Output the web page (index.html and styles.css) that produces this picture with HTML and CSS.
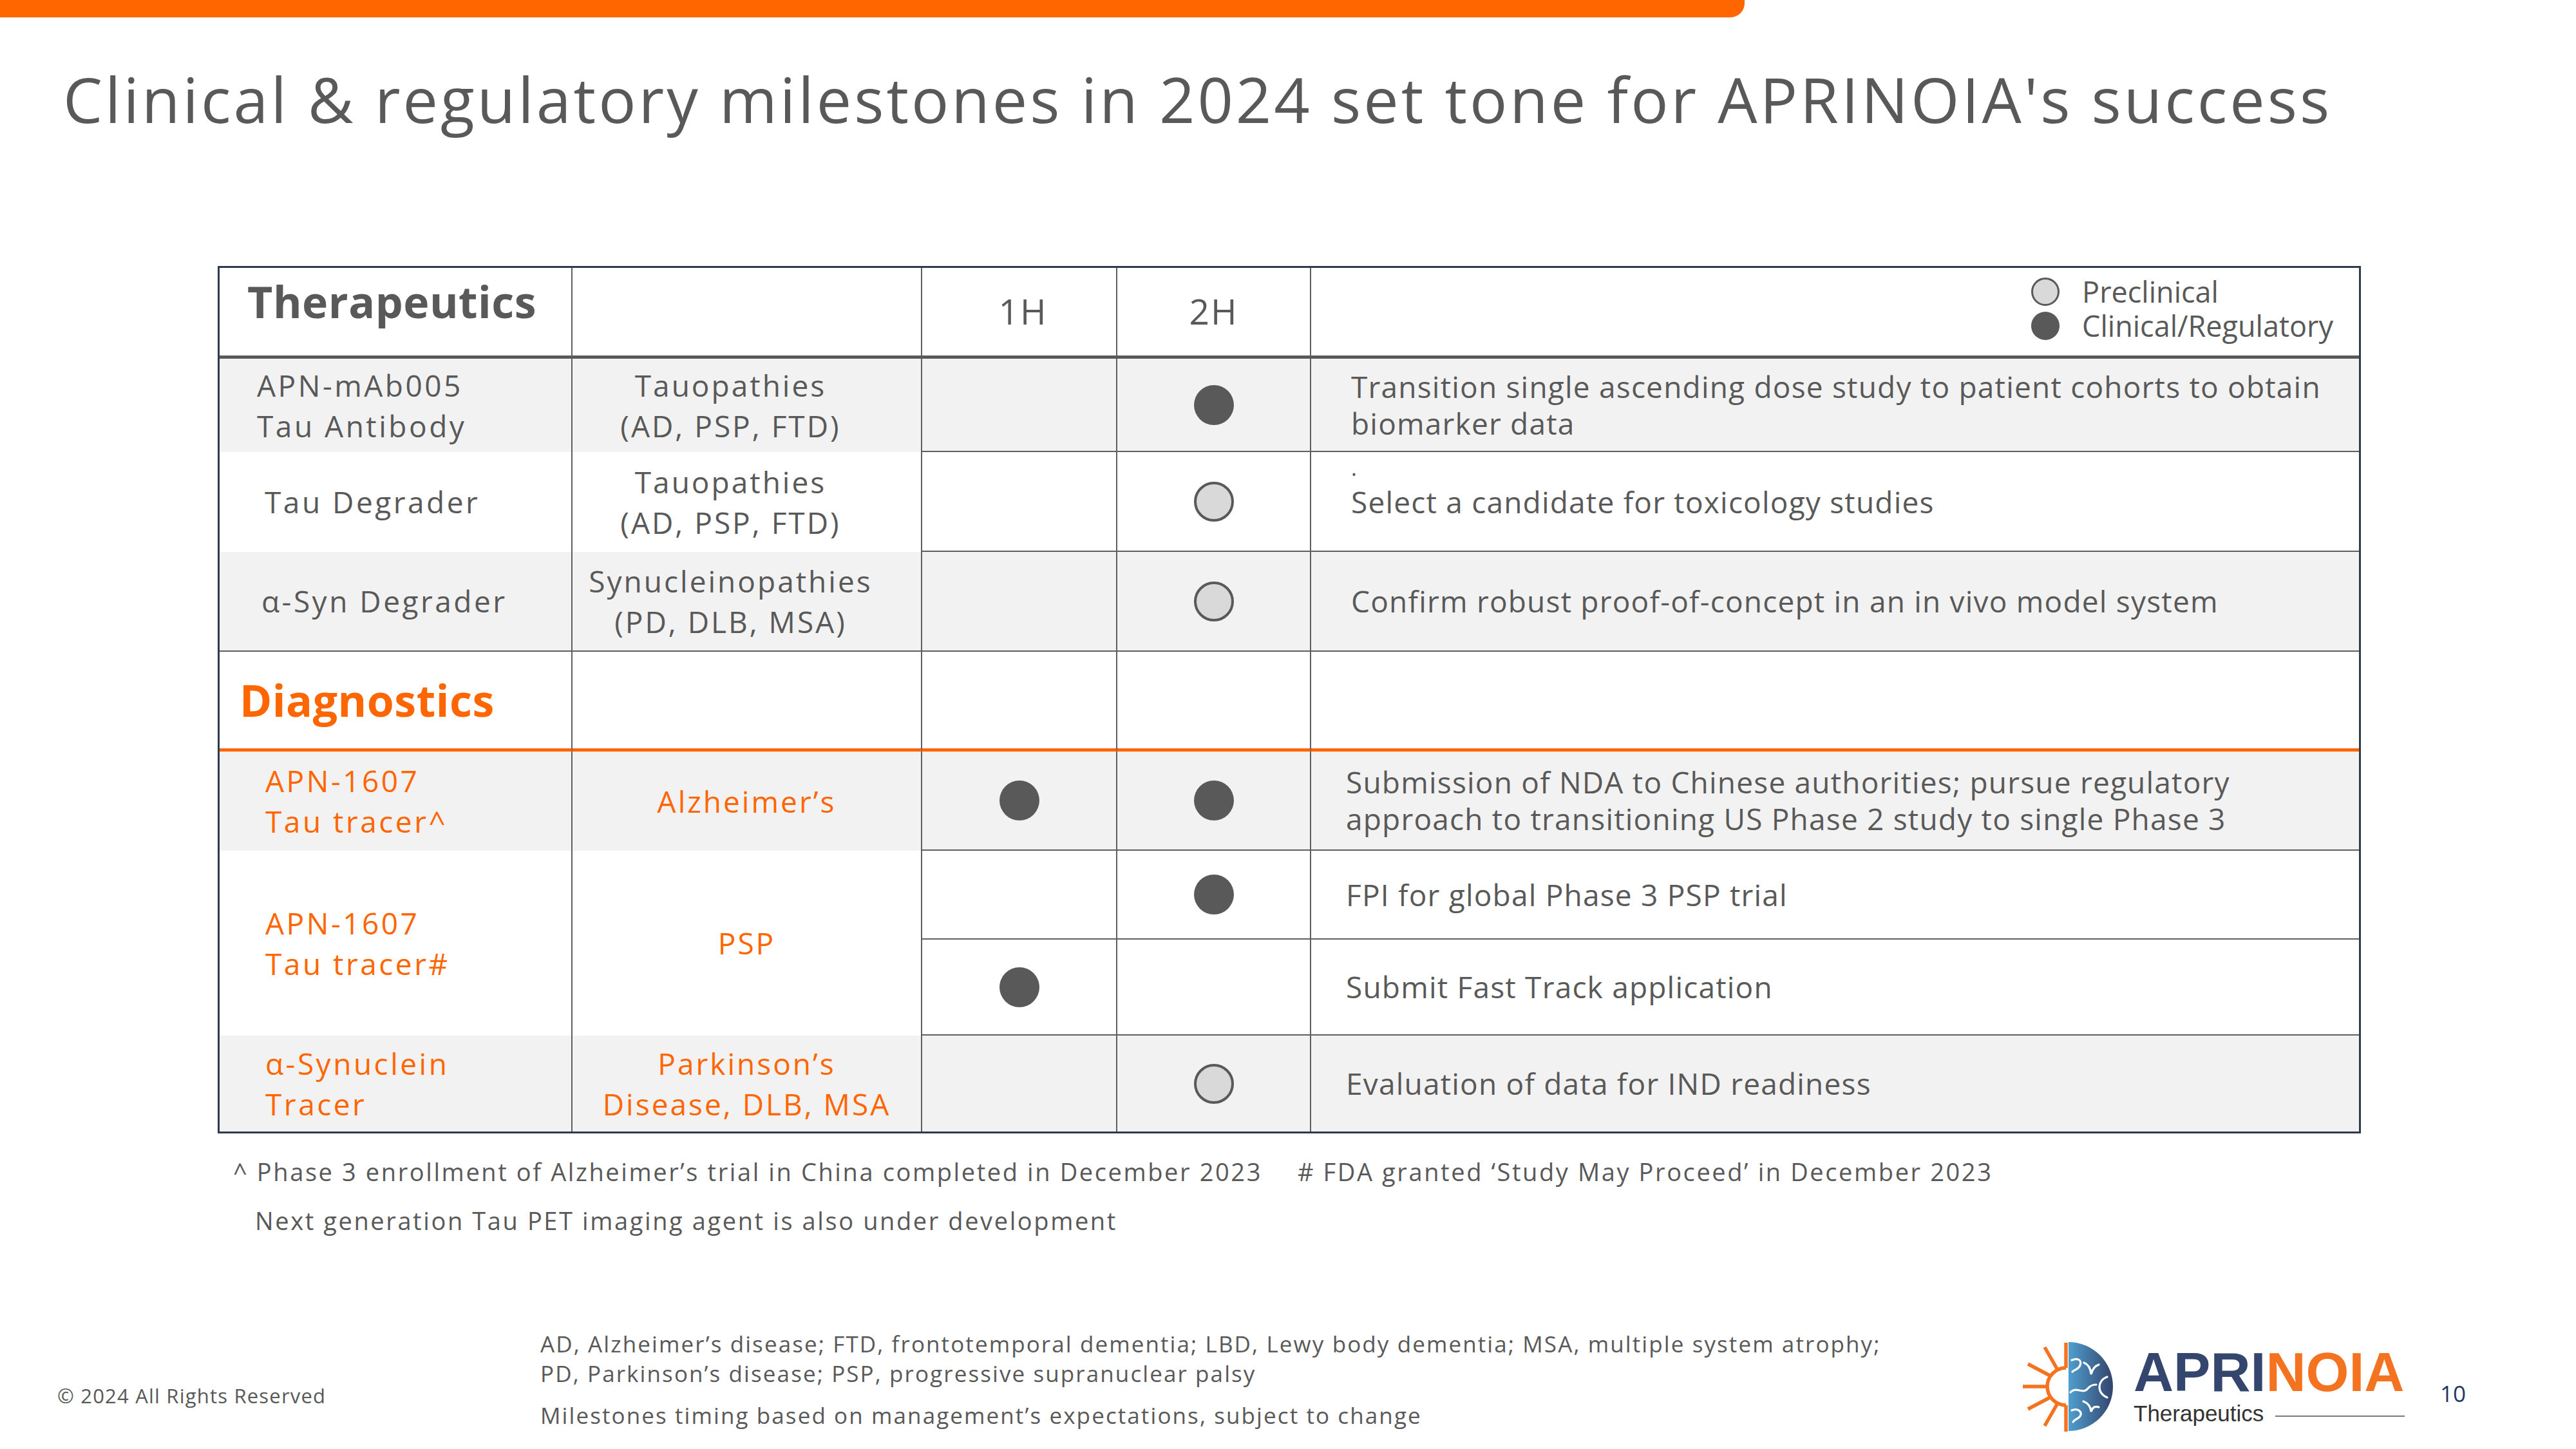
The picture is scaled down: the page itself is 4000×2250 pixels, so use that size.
FILE: index.html
```html
<!DOCTYPE html>
<html lang="en">
<head>
<meta charset="utf-8">
<title>Clinical &amp; regulatory milestones</title>
<link rel="stylesheet" href="styles.css">
</head>
<body>
<div class="slide">
  <div class="topbar"></div>
  <h1 class="title">Clinical &amp; regulatory milestones in 2024 set tone for APRINOIA's success</h1>

  <div class="grid">
    <!-- header -->
    <div class="c hd head-name"><span class="section">Therapeutics</span></div>
    <div class="c hd"></div>
    <div class="c hd half h1">1H</div>
    <div class="c hd half">2H</div>
    <div class="c hd last legend-cell">
      <div class="legend">
        <div class="lg-item"><span class="dot open sm"></span><span>Preclinical</span></div>
        <div class="lg-item"><span class="dot fill sm"></span><span>Clinical/Regulatory</span></div>
      </div>
    </div>

    <!-- row 1 -->
    <div class="c g name">APN-mAb005<br>Tau Antibody</div>
    <div class="c g ind shift">Tauopathies<br>(AD, PSP, FTD)</div>
    <div class="c g bl mark"></div>
    <div class="c g bl mark"><span class="dot fill"></span></div>
    <div class="c g bl last desc">Transition single ascending dose study to patient cohorts to obtain<br>biomarker data</div>

    <!-- row 2 -->
    <div class="c name in2">Tau Degrader</div>
    <div class="c ind shift">Tauopathies<br>(AD, PSP, FTD)</div>
    <div class="c bl mark"></div>
    <div class="c bl mark"><span class="dot open"></span></div>
    <div class="c bl last desc top"><div class="stray">.</div><div>Select a candidate for toxicology studies</div></div>

    <!-- row 3 -->
    <div class="c g bl name in3">α-Syn Degrader</div>
    <div class="c g bl ind shift">Synucleinopathies<br>(PD, DLB, MSA)</div>
    <div class="c g bl mark"></div>
    <div class="c g bl mark"><span class="dot open"></span></div>
    <div class="c g bl last desc">Confirm robust proof-of-concept in an in vivo model system</div>

    <!-- diagnostics header -->
    <div class="c ob diag-name"><span class="section orange">Diagnostics</span></div>
    <div class="c ob"></div>
    <div class="c ob"></div>
    <div class="c ob"></div>
    <div class="c ob last"></div>

    <!-- d1 -->
    <div class="c g name dn orange">APN-1607<br>Tau tracer^</div>
    <div class="c g ind orange">Alzheimer’s</div>
    <div class="c g bl mark"><span class="dot fill"></span></div>
    <div class="c g bl mark"><span class="dot fill"></span></div>
    <div class="c g bl last desc dd">Submission of NDA to Chinese authorities; pursue regulatory<br>approach to transitioning US Phase 2 study to single Phase 3</div>

    <!-- d2 / d3 -->
    <div class="c name dn orange span2">APN-1607<br>Tau tracer#</div>
    <div class="c ind orange span2">PSP</div>
    <div class="c bl mark"></div>
    <div class="c bl mark"><span class="dot fill"></span></div>
    <div class="c bl last desc dd">FPI for global Phase 3 PSP trial</div>

    <div class="c bl mark"><span class="dot fill"></span></div>
    <div class="c bl mark"></div>
    <div class="c bl last desc dd">Submit Fast Track application</div>

    <!-- d4 -->
    <div class="c g name dn orange">α-Synuclein<br>Tracer</div>
    <div class="c g ind orange">Parkinson’s<br>Disease, DLB, MSA</div>
    <div class="c g mark"></div>
    <div class="c g mark"><span class="dot open"></span></div>
    <div class="c g last desc dd">Evaluation of data for IND readiness</div>
  </div>

  <div class="notes">
    <div class="note1"><span>^ Phase 3 enrollment of Alzheimer’s trial in China completed in December 2023</span><span># FDA granted ‘Study May Proceed’ in December 2023</span></div>
    <div class="note2">Next generation Tau PET imaging agent is also under development</div>
  </div>

  <div class="footer">
    <div class="copy">© 2024 All Rights Reserved</div>
    <div class="abbr">
      <p class="abbr-list">AD, Alzheimer’s disease; FTD, frontotemporal dementia; LBD, Lewy body dementia; MSA, multiple system atrophy;<br>PD, Parkinson’s disease; PSP, progressive supranuclear palsy</p>
      <p class="timing">Milestones timing based on management’s expectations, subject to change</p>
    </div>
    <div class="logo">
      <svg class="logo-mark" width="150" height="145" viewBox="0 0 150 145" aria-hidden="true">
        <defs>
          <linearGradient id="brainGrad" x1="0" y1="0" x2="1" y2="0">
            <stop offset="0" stop-color="#4f9fcf"/>
            <stop offset="1" stop-color="#33446c"/>
          </linearGradient>
        </defs>
        <path d="M74 2 A69 69 0 0 1 74 140 Z" fill="url(#brainGrad)"/>
        <g fill="none" stroke="#ffffff" stroke-width="3.2" stroke-linecap="round">
          <path d="M79 30 C88 26 95 30 92 38 C89 45 84 44 80 48"/>
          <path d="M98 34 Q108 38 109 52 Q112 40 121 37"/>
          <path d="M77 80 C86 70 96 84 104 74 C108 69 112 68 117 68"/>
          <path d="M134 56 C119 61 117 81 134 88"/>
          <path d="M97 94 Q108 98 109 110 Q112 100 121 103"/>
          <path d="M79 108 C88 104 96 110 92 117 C90 121 84 121 81 126"/>
        </g>
        <g fill="none" stroke="#f47321" stroke-width="5.5" stroke-linecap="butt">
          <path d="M70 3 V42"/>
          <path d="M70 100 V141"/>
          <path d="M70 42 A29 29 0 0 0 70 100"/>
          <path d="M37 10 L57 45"/>
          <path d="M11 36 L47 55"/>
          <path d="M3 71 L42 71"/>
          <path d="M11 106 L47 87"/>
          <path d="M37 132 L57 97"/>
        </g>
      </svg>
      <div class="logo-text">
        <div class="wordmark"><span class="apri">APRI</span><span class="noia">NOIA</span></div>
        <div class="sub"><span>Therapeutics</span><span class="rule"></span></div>
      </div>
    </div>
    <div class="pg">10</div>
  </div>
</div>
</body>
</html>
```

FILE: styles.css
```css
html, body {
  margin: 0;
  padding: 0;
  background: #ffffff;
}

.slide {
  width: 4000px;
  height: 2250px;
  overflow: hidden;
  display: flex;
  flex-direction: column;
  font-family: "Open Sans", "DejaVu Sans", sans-serif;
  color: #595959;
  background: #ffffff;
}

.topbar {
  width: 2709px;
  height: 27px;
  flex: 0 0 27px;
  background: #ff6600;
  border-bottom-right-radius: 22px;
}

.title {
  margin: 68px 0 0 0;
  padding-left: 98px;
  font-size: 97px;
  line-height: 116px;
  font-weight: 400;
  letter-spacing: 4px;
  color: #595959;
  white-space: nowrap;
}

/* ---------- table ---------- */
.grid {
  margin: 202px 0 0 338px;
  width: 3328px;
  box-sizing: border-box;
  border: 3px solid #2f3b4c;
  display: grid;
  grid-template-columns: 548px 543px 303px 301px 1627px;
  grid-template-rows: 141px 145px 155px 155px 155px 154px 138px 149px 149px;
}

.c {
  box-sizing: border-box;
  display: flex;
  align-items: center;
  border-right: 2px solid #5f5f5f;
  background: #ffffff;
}
.c.last { border-right: none; }
.c.g { background: #f2f2f2; }
.c.bl { border-bottom: 2px solid #5f5f5f; }
.c.hd { border-bottom: 5px solid #595959; align-items: flex-start; }
.c.ob { border-bottom: 5px solid #ff6600; }
.span2 { grid-row: span 2; }

.section {
  font-size: 68px;
  line-height: 82px;
  font-weight: 700;
  letter-spacing: 0.5px;
  color: #595959;
  white-space: nowrap;
}
.section.orange { color: #ff6600; }

.head-name { padding: 11px 0 0 43px; }
.diag-name { padding-left: 31px; }

.half {
  justify-content: center;
  padding-top: 34px;
  font-size: 55px;
  line-height: 66px;
  letter-spacing: 2px;
}
.half.h1 { padding-left: 12px; }

.legend-cell {
  justify-content: flex-end;
  padding: 10px 40px 0 0;
}
.legend {
  display: flex;
  flex-direction: column;
}
.lg-item {
  display: flex;
  align-items: center;
  gap: 35px;
  font-size: 45px;
  line-height: 53px;
  white-space: nowrap;
}

.dot {
  display: block;
  width: 62px;
  height: 62px;
  border-radius: 50%;
  box-sizing: border-box;
  flex: 0 0 auto;
}
.dot.sm { width: 44px; height: 44px; }
.dot.fill { background: #595959; }
.dot.open { background: #d9d9d9; border: 4px solid #595959; }
.dot.sm.open { border-width: 3px; }

.mark { justify-content: center; }

.name {
  padding-left: 58px;
  font-size: 46px;
  line-height: 63px;
  letter-spacing: 3.5px;
  white-space: nowrap;
}
.name.in2 { padding-left: 70px; }
.name.in3 { padding-left: 65px; }
.name.dn { padding-left: 71px; }

.ind {
  justify-content: center;
  text-align: center;
  font-size: 46px;
  line-height: 63px;
  letter-spacing: 3px;
  white-space: nowrap;
}
.ind.shift { padding-right: 50px; }

.orange { color: #ff6600; }

.desc {
  padding-left: 62px;
  font-size: 46px;
  line-height: 57px;
  letter-spacing: 1.2px;
  white-space: nowrap;
}
.desc.dd { padding-left: 54px; }
.desc.top {
  flex-direction: column;
  align-items: flex-start;
  justify-content: flex-start;
}
.stray {
  font-size: 34px;
  line-height: 49px;
}

/* ---------- notes ---------- */
.notes {
  padding-left: 362px;
  font-size: 38px;
  line-height: 44px;
  letter-spacing: 2.6px;
  white-space: nowrap;
}
.note1 {
  margin-top: 37px;
  display: flex;
  gap: 55px;
}
.note2 {
  margin-top: 32px;
  padding-left: 34px;
}

/* ---------- footer ---------- */
.footer {
  margin-top: auto;
  height: 190px;
  flex: 0 0 190px;
  display: flex;
  align-items: flex-start;
}
.copy {
  flex: 0 0 839px;
  box-sizing: border-box;
  padding-left: 89px;
  margin-top: 87px;
  font-size: 31px;
  line-height: 40px;
  letter-spacing: 1.2px;
  white-space: nowrap;
}
.abbr {
  flex: 0 0 2299px;
  margin-top: 4px;
  font-size: 35px;
  line-height: 46px;
  letter-spacing: 2.1px;
  white-space: nowrap;
}
.abbr p { margin: 0; }
.abbr .timing { margin-top: 19px; }

.logo {
  display: flex;
  align-items: flex-start;
  gap: 25px;
}
.logo-mark {
  display: block;
  margin-top: 22px;
}
.logo-text {
  width: 421px;
  margin-top: 27px;
  font-family: "Liberation Sans", Arial, sans-serif;
}
.wordmark {
  font-size: 86px;
  line-height: 86px;
  font-weight: 700;
  white-space: nowrap;
}
.apri { color: #34466e; }
.noia { color: #f47321; }
.sub {
  margin-top: 4px;
  display: flex;
  align-items: center;
  font-size: 35px;
  line-height: 35px;
  color: #333333;
}
.rule {
  flex: 1;
  height: 2px;
  margin-left: 18px;
  margin-top: 8px;
  background: #7a7a7a;
}
.pg {
  margin-left: 55px;
  margin-top: 84px;
  font-size: 35px;
  line-height: 40px;
  color: #1f3864;
}
```
